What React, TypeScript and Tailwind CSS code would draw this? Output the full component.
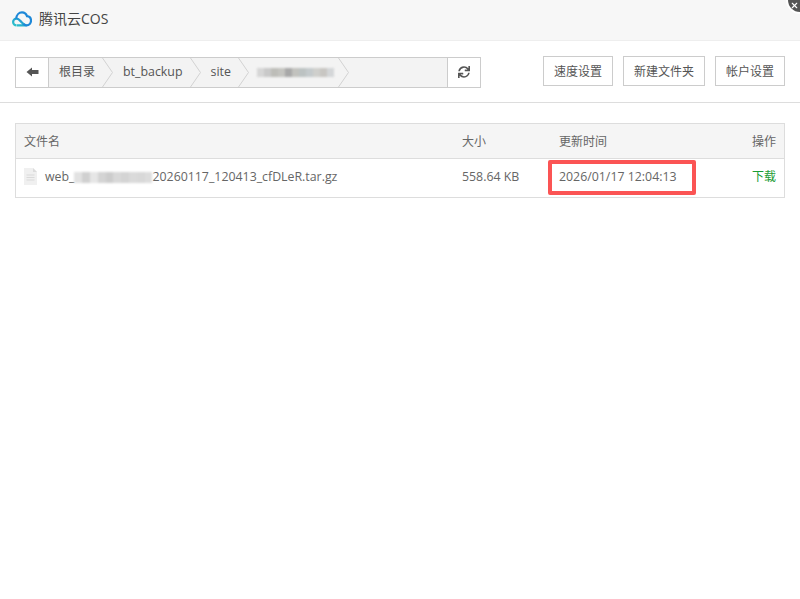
import { X } from 'lucide-react'
import { FaSync } from 'react-icons/fa'

const font = { fontFamily: '"Open Sans", "Noto Sans CJK SC", sans-serif' }

const CloudLogo = () => (
    <svg width="20" height="16" viewBox="0 0 20 16" fill="none" className="shrink-0">
        <defs>
            <linearGradient id="logoGrad" x1="0" y1="1" x2="1" y2="0">
                <stop offset="0" stopColor="#2ec5c9" />
                <stop offset="1" stopColor="#1e88d8" />
            </linearGradient>
        </defs>
        <path
            d="M4.6 14.4C2.6 14.4 1.1 12.9 1.1 11C1.1 9.1 2.7 7.7 4.6 7.7C6.6 7.7 8 9.6 9.6 11.2C11 12.6 12 14.4 14.6 14.4L5 14.4"
            stroke="url(#logoGrad)"
            strokeWidth="2.2"
        />
        <path
            d="M4.2 7.8C4.4 4 7 1.4 10 1.4C12.4 1.4 14.3 3 15 5.2C17.3 5.4 19 7.3 19 9.6C19 12.2 17 14.4 14.6 14.4C13.4 14.4 12.4 13.8 11.6 13"
            stroke="#1e88d8"
            strokeWidth="2.2"
        />
    </svg>
)

const Chevron = () => (
    <svg width="11" height="29" viewBox="0 0 11 29" fill="none" className="shrink-0">
        <path d="M0.5 0L10.5 14.5L0.5 29" stroke="#d2d2d2" strokeWidth="1" />
    </svg>
)

// mosaic standing in for the blurred out name
const Blurred = ({ cells, h, w }: { cells: string[]; h: string; w: string }) => (
    <div className={`flex shrink-0 ${h} ${w} blur-[1px]`}>
        {cells.map((c, i) => (
            <div key={i} className="flex-1" style={{ backgroundColor: c }} />
        ))}
    </div>
)

const Crumb = ({ label, className }: { label: string; className: string }) => (
    <>
        <span className={`text-[#555555] whitespace-nowrap ${className}`}>{label}</span>
        <Chevron />
    </>
)

const ActionButton = ({ label, className }: { label: string; className: string }) => (
    <button type="button" className={`h-[30px] pt-[1px] border border-[#cccccc] bg-white text-[12px] text-[#555555] ${className}`}>
        {label}
    </button>
)

export default function App() {
    return (
        <div className="relative w-[800px] h-[599px] overflow-hidden bg-white" style={font}>
            <div className="h-[41px] bg-[#f7f7f7] border-b border-[#eeeeee] flex items-center pl-3 pb-[3px] gap-[7px]">
                <CloudLogo />
                <span className="text-[14px] text-[#444444]">腾讯云COS</span>
            </div>
            <div className="absolute -top-[14px] -right-[14px] w-[28px] h-[28px] rounded-full bg-[#555555] border-2 border-white flex items-end justify-start p-[2px]">
                <X size={9} color="#ffffff" strokeWidth={3} />
            </div>

            <div className="h-[62px] border-b border-[#dddddd] flex items-center justify-between pl-[15px] pr-[15px]">
                <div className="flex h-[31px] w-[466px] border border-[#cccccc] bg-[#f3f3f3] mt-[1px]">
                    <button type="button" className="w-[33px] bg-white border-r border-[#cccccc] flex items-center justify-center">
                        <svg width="13" height="10" viewBox="0 0 13 10">
                            <path d="M0.5 5L6 0.5V3H12.5V7H6V9.5Z" fill="#555555" />
                        </svg>
                    </button>
                    <div className="flex-1 flex items-center min-w-0 overflow-hidden">
                        <Crumb label="根目录" className="ml-[10px] mr-[7px] text-[12px]" />
                        <Crumb label="bt_backup" className="ml-[10px] mr-[7px] text-[12.4px]" />
                        <Crumb label="site" className="ml-[10px] mr-[7px] text-[12.4px]" />
                        <div className="ml-[8px] mr-[4px]">
                            <Blurred w="w-[77px]" h="h-[9px]" cells={['#d6d6d6', '#c9c9c9', '#bdbdb8', '#c4c4c0', '#a8a8a8', '#c2c2be', '#bcc2c2', '#c4cacc', '#cfcfcc', '#c8c6c2', '#d4d6d8']} />
                        </div>
                        <Chevron />
                    </div>
                    <button type="button" className="w-[33px] bg-white border-l border-[#cccccc] flex items-center justify-center">
                        <FaSync size={12} color="#555555" />
                    </button>
                </div>
                <div className="flex gap-[10px] -mt-[1px]">
                    <ActionButton label="速度设置" className="w-[70px]" />
                    <ActionButton label="新建文件夹" className="w-[82px]" />
                    <ActionButton label="帐户设置" className="w-[70px]" />
                </div>
            </div>

            <div className="mx-[15px] mt-[20px] border border-[#dddddd] text-[12px] text-[#666666]">
                <div className="h-[35px] pt-[1px] bg-[#f5f5f5] border-b border-[#dddddd] flex items-center">
                    <span className="pl-[8px] w-[446px]">文件名</span>
                    <span className="w-[97px]">大小</span>
                    <span className="flex-1">更新时间</span>
                    <span className="pr-[8px]">操作</span>
                </div>
                <div className="h-[38px] pb-[1px] flex items-center text-[12.35px]">
                    <div className="w-[446px] pl-[8px] flex items-center">
                        <svg width="13" height="17" viewBox="0 0 13 17" className="shrink-0 -mt-[1px]">
                            <path d="M0 0H9L13 4V17H0Z" fill="#f0f0f0" />
                            <path d="M9 0L13 4H9Z" fill="#dcdcdc" />
                            <path d="M2.5 7H10.5M2.5 9.5H10.5M2.5 12H10.5" stroke="#dadada" strokeWidth="1" />
                        </svg>
                        <span className="ml-[8px]">web_</span>
                        <Blurred w="w-[78px]" h="h-[11px]" cells={['#e2e2e2', '#d0d0d0', '#e6e6e6', '#d4d4d4', '#cccccc', '#d8d8d8', '#d4d4d4', '#dadada', '#d8d8d8', '#dcdcdc']} />
                        <span>20260117_120413_cfDLeR.tar.gz</span>
                    </div>
                    <span className="w-[97px]">558.64 KB</span>
                    <span className="flex-1">2026/01/17 12:04:13</span>
                    <a className="pr-[8px] pb-[1px] text-[12px] text-[#1c9c34]">下载</a>
                </div>
            </div>

            <div className="absolute left-[548px] top-[160px] w-[148px] h-[35px] border-4 border-[#fb5454] rounded-[2px]" />
        </div>
    )
}
